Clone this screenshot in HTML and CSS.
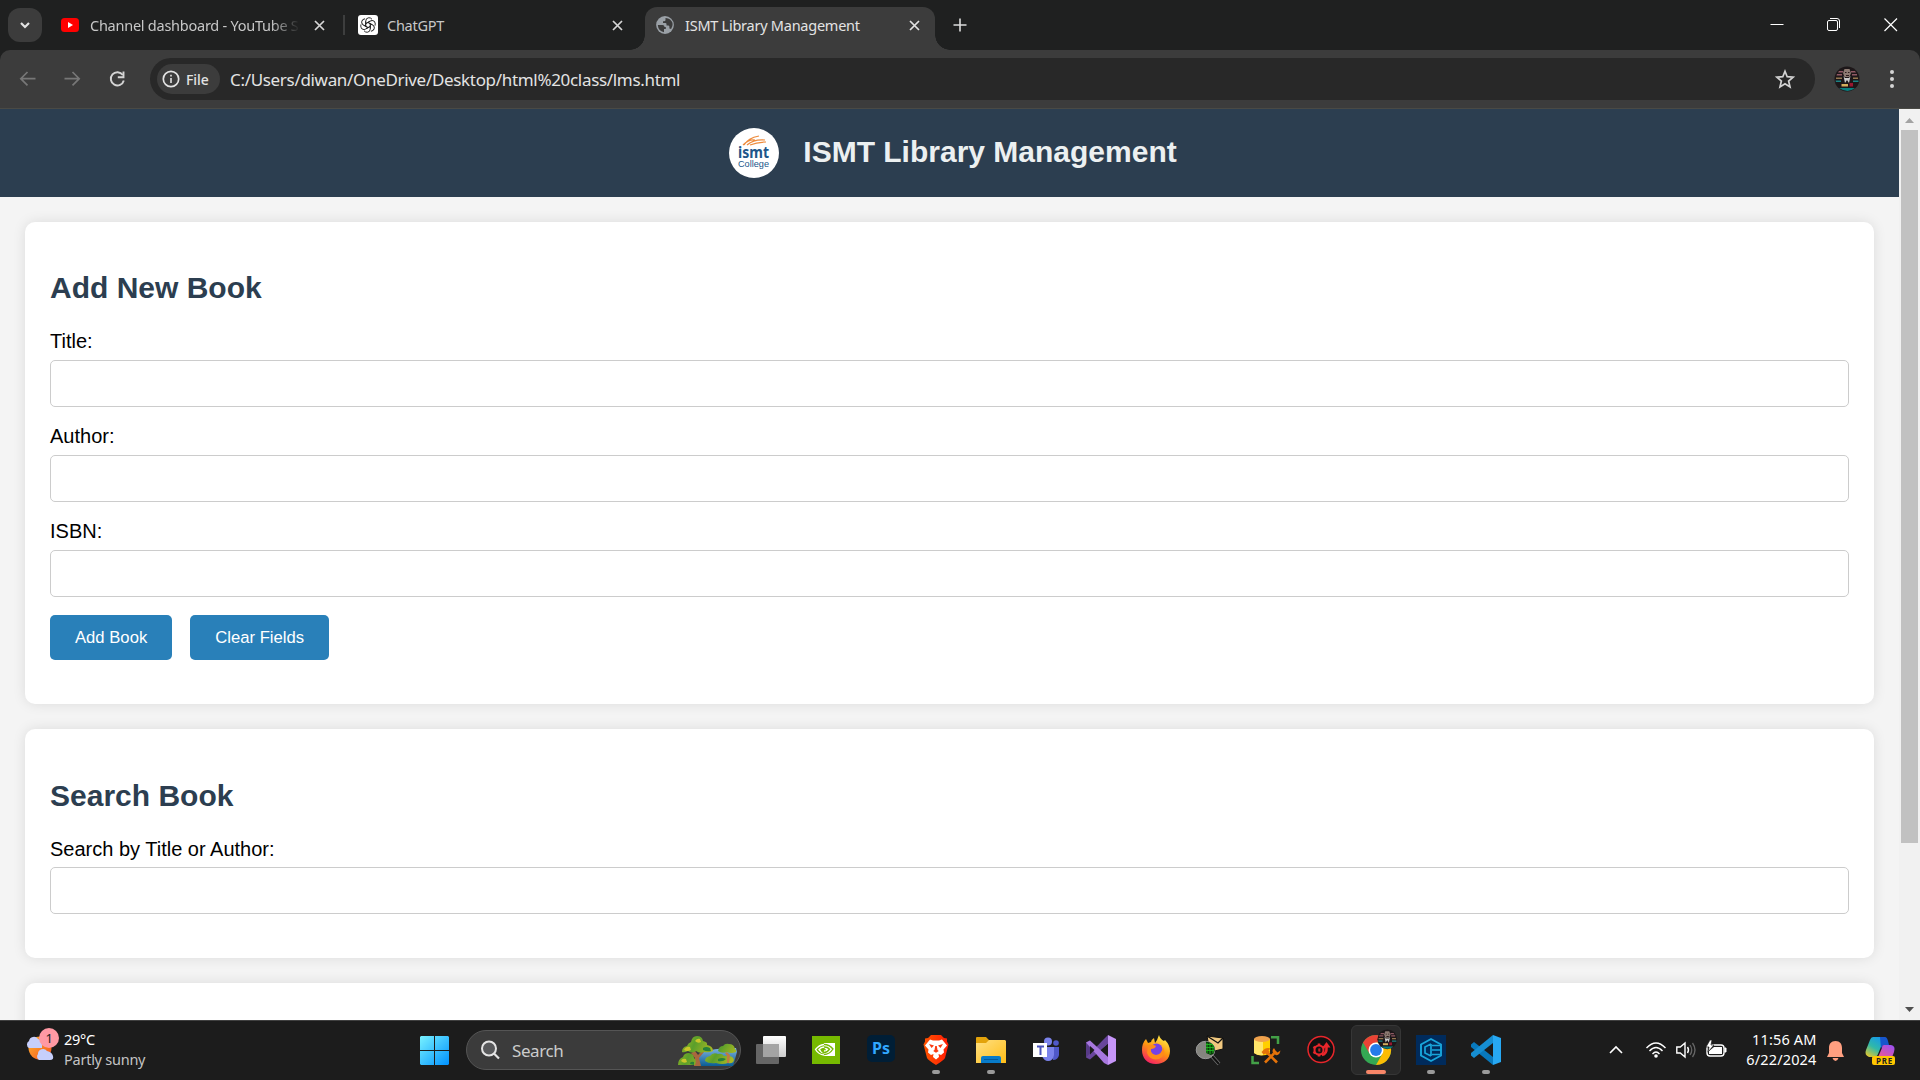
FILE: index.html
```html
<!DOCTYPE html>
<html lang="en">
<head>
<meta charset="utf-8">
<title>ISMT Library Management</title>
<link rel="stylesheet" href="styles.css">
</head>
<body>
<div class="tabstrip">
  <span class="tabsearch"><svg width="10" height="7" viewBox="0 0 10 7"><path d="M1 1l4 4 4-4" fill="none" stroke="#e3e3e3" stroke-width="2.200"/></svg></span>
  <div class="tab tab-youtube">
    <svg width="18" height="14" viewBox="0 0 18 14"><rect width="18" height="14" rx="3.500" fill="#f00"/><path d="M7 4v6l5-3z" fill="#fff"/></svg>
    <span class="tab-title faded">Channel dashboard - YouTube S</span>
    <svg class="close" width="11" height="11" viewBox="0 0 11 11"><path d="m1 1 9 9M10 1l-9 9"/></svg>
  </div>
  <span class="tab-sep"></span>
  <div class="tab tab-chatgpt">
    <svg width="20" height="20" viewBox="0 0 20 20"><rect width="20" height="20" rx="3" fill="#fff"/><g fill="none" stroke="#222" stroke-width=".95"><path id="petal" d="M7.700 11.300V6.200Q7.800 3 10.800 2.700q2 0 3.200 1.600M7.700 8.700 12 6.200"/><use href="#petal" transform="rotate(60 10 10)"/><use href="#petal" transform="rotate(120 10 10)"/><use href="#petal" transform="rotate(180 10 10)"/><use href="#petal" transform="rotate(240 10 10)"/><use href="#petal" transform="rotate(300 10 10)"/></g></svg>
    <span class="tab-title">ChatGPT</span>
    <svg class="close" width="11" height="11" viewBox="0 0 11 11"><path d="m1 1 9 9M10 1l-9 9"/></svg>
  </div>
  <div class="tab tab-active">
    <svg width="18" height="18" viewBox="0 0 18 18"><circle cx="9" cy="9" r="8.900" fill="#9aa0a6"/><path d="M1.800 9h4.700q2 .2 2 2h1.300v2H8v3.200Q2.200 15 1.800 9zM9.500 1.900V4q0 1.300-1.500 1.300H7v1.600h2.300q1.200 0 1.200 1.200v1.400h1.700q1 0 1.200 1v2q1 .2 1.700.6 3.500-5.600-1-9.600-2-1.700-4.600-1.600z" fill="#3c3c3c"/></svg>
    <span class="tab-title">ISMT Library Management</span>
    <svg class="close" width="11" height="11" viewBox="0 0 11 11"><path d="m1 1 9 9M10 1l-9 9"/></svg>
  </div>
  <svg class="newtab" width="14" height="14" viewBox="0 0 14 14"><path d="M7 .5v13M.5 7h13" stroke="#dcdcdc" stroke-width="1.600"/></svg>
  <div class="window-controls">
    <svg width="14" height="14" viewBox="0 0 14 14"><path d="M.5 6.500h13" stroke="#fff"/></svg>
    <svg width="14" height="14" viewBox="0 0 14 14"><g fill="none" stroke="#fff"><rect x=".5" y="2.500" width="10" height="10" rx="1.500"/><path d="M3 .5h7q2.500 0 2.500 2.500v7"/></g></svg>
    <svg width="14" height="14" viewBox="0 0 14 14"><path d="m.5.5 12.500 12.500M13 .5.500 13" stroke="#fff" stroke-width="1.200"/></svg>
  </div>
</div>

<div class="toolbar">
  <div class="nav">
    <svg width="18" height="18" viewBox="0 0 18 18"><path d="M16.500 8.700H2M8.500 2 1.800 8.700l6.700 6.700" fill="none" stroke="#777" stroke-width="1.700"/></svg>
    <svg width="18" height="18" viewBox="0 0 18 18"><path d="M.5 8.700H15M8.500 2l6.700 6.700-6.700 6.700" fill="none" stroke="#777" stroke-width="1.700"/></svg>
    <svg width="18" height="18" viewBox="0 0 18 18"><path d="M13.800 5A6.600 6.600 0 1 0 14.800 10.500" fill="none" stroke="#d4d4d4" stroke-width="1.900"/><path d="M14.500 1.500v5.700H8.800" fill="none" stroke="#d4d4d4" stroke-width="1.900"/></svg>
  </div>
  <div class="omnibox">
    <span class="chip"><svg width="18" height="18" viewBox="0 0 18 18"><circle cx="9" cy="9" r="7.700" fill="none" stroke="#e3e3e3" stroke-width="1.700"/><path d="M9 8v5M9 4.800v1.700" stroke="#e3e3e3" stroke-width="1.600"/></svg><span>File</span></span>
    <span class="url">C:/Users/diwan/OneDrive/Desktop/html%20class/lms.html</span>
    <svg class="star" width="20" height="20" viewBox="0 0 20 20"><path d="m10 2.200 2.200 5.500 5.900.5-4.500 3.800 1.400 5.900L10 14.700 5 17.900l1.400-5.900-4.500-3.800 5.900-.5z" fill="none" stroke="#d4d4d4" stroke-width="1.700"/></svg>
  </div>
  <svg class="avatar" width="26" height="26" viewBox="0 0 26 26">
    <defs><g id="portrait"><circle cx="13" cy="13" r="12.500" fill="#1d1719"/><path d="M5 5h4v1.500H4zM17 5h4l1 1.500h-5zM3 8h5v1.500H2.500zM18 8h5v1.500h-5z" fill="#8f5964"/><path d="M2 11.500h6V13H2zM19 11.500h5V13h-5z" fill="#94784f"/><path d="M1.500 14.500H7V16H2zM19 14.500h5.500V16H19z" fill="#1b8486"/><path d="M10.500 3h5l1.500 4-1.500 4h-5L9 7z" fill="#8d7a72"/><path d="M11 6h1.500v1H11zM14 6h1.500v1H14zM12 9h3v1h-3z" fill="#2a1d1c"/><path d="m9.500 10 1.500 7 2-3 2 3 1.500-7-1.500 2h-4z" fill="#c9c9c9"/><path d="M7.500 18H14v2.500H7.500z" fill="#d3ae5d"/><path d="M15.500 17H19v3.500h-3.500z" fill="#981730"/><path d="M5 22h16q-7 6-16 0z" fill="#087f80"/></g></defs><use href="#portrait"/>
  </svg>
  <svg class="dots" width="6" height="20" viewBox="0 0 6 20"><g fill="#d4d4d4"><circle cx="3" cy="3" r="2"/><circle cx="3" cy="10" r="2"/><circle cx="3" cy="17" r="2"/></g></svg>
</div>

<div class="viewport">
  <div class="page">
    <header class="site-header">
      <svg class="logo" width="50" height="50" viewBox="0 0 50 50"><circle cx="25" cy="25" r="25" fill="#fff"/><g fill="none" stroke="#ee8b3c" stroke-width="1.200"><path d="M14 17q6-6 12-5M15 17q4-7 15-9M18 17q7-6 18-5M21 17q7-3 16-3"/></g><text x="9" y="29.500" class="logo-name" textLength="31" lengthAdjust="spacingAndGlyphs">ismt</text><text x="9" y="38.500" class="logo-sub" textLength="31" lengthAdjust="spacingAndGlyphs">College</text></svg>
      <h1>ISMT Library Management</h1>
    </header>
    <main>
      <section class="card card-add">
        <h2>Add New Book</h2>
        <form class="fields">
          <label for="title">Title:</label><input id="title" type="text">
          <label for="author">Author:</label><input id="author" type="text">
          <label for="isbn">ISBN:</label><input id="isbn" type="text">
          <div class="buttons"><button type="button">Add Book</button><button type="button">Clear Fields</button></div>
        </form>
      </section>
      <section class="card">
        <h2>Search Book</h2>
        <form class="fields"><label for="query">Search by Title or Author:</label><input id="query" type="text"></form>
      </section>
      <section class="card card-next"></section>
    </main>
  </div>
  <div class="scrollbar">
    <svg width="21" height="21" viewBox="0 0 21 21"><path d="m6 14 4.500-5 4.500 5z" fill="#a3a3a3"/></svg>
    <span class="thumb"></span>
    <svg class="down" width="21" height="21" viewBox="0 0 21 21"><path d="m6 8 4.500 5L15 8z" fill="#505050"/></svg>
  </div>
</div>

<div class="taskbar">
  <div class="weather">
    <svg width="34" height="34" viewBox="0 0 34 34"><defs><linearGradient id="sun" x2="1" y2="1"><stop stop-color="#ffb52e"/><stop offset="1" stop-color="#f4511e"/></linearGradient></defs><circle cx="14" cy="20" r="11.500" fill="url(#sun)"/><path d="M3 20a4 4 0 0 1 0-7 5 5 0 0 1 9-2q5 1 4 9zM13 32a4 4 0 0 1-1-6 5 5 0 0 1 9-3q5 1 6 5t-3 4z" fill="#c6cffc"/><circle cx="23" cy="10" r="10" fill="#ff99a4"/><text x="23" y="15" class="badge-num">1</text></svg>
    <div class="weather-text"><span>29°C</span><span class="dim">Partly sunny</span></div>
  </div>
  <svg class="start" width="29" height="29" viewBox="0 0 29 29"><defs><linearGradient id="win" gradientUnits="userSpaceOnUse" x2="29" y2="29"><stop stop-color="#78f2ff"/><stop offset="1" stop-color="#0091ff"/></linearGradient></defs><path fill="url(#win)" d="M1 0h13v14H0V1zM15 0h13l1 1v13H15zM0 15h14v14H1l-1-1zM15 15h14v13l-1 1H15z"/></svg>
  <div class="search">
    <svg width="20" height="20" viewBox="0 0 20 20"><circle cx="8" cy="8.500" r="7" fill="#58595b" stroke="#e4e4e4" stroke-width="2"/><path d="m13 13.500 5 5" stroke="#e4e4e4" stroke-width="2.200"/></svg>
    <span class="search-label">Search</span>
    <svg class="trees" width="60" height="30" viewBox="0 0 60 30"><defs><linearGradient id="river" x2="0" y2="1"><stop stop-color="#7fb3e0"/><stop offset="1" stop-color="#0a5d94"/></linearGradient><linearGradient id="leaf" x2="1" y2=".4"><stop stop-color="#b5bf1f"/><stop offset=".5" stop-color="#5a9f2b"/><stop offset="1" stop-color="#a8b823"/></linearGradient></defs><path d="M22 17q12-5 36-5l1 4-4 14H22q-3-7 0-13z" fill="url(#river)"/><path d="m17 15 3 4 4-4 2 1-5 6 2 8h-7l1-8-4-5z" fill="#a9683d"/><path d="M0 29q0-6 5-8 1-4 6-4 5 1 5 5 3 2 1 7zM4 16q0-5 5-6 1-3 4-4 1-6 6-6 5 0 6 5 5 1 4 4 6 1 6 6-4 2-9 1-4 2-8-1-4 3-8 0-4 2-6 1z" fill="url(#leaf)"/><path d="M40 15q1-5 5-5 2-3 6-2 5 0 6 5 2 1 1 3-5 2-9 0-5 2-9-1zM27 25q0-4 5-5 3-4 8-2 4-1 6 2 9-1 10 4-1 4-6 3-6 2-12 0-7 1-11-2z" fill="url(#leaf)"/><path d="m49 16 3 3-1 8h-2v-7l-2-3z" fill="#c07a42"/><path d="M6 14q2-4 6-3l1 3q-4 2-7 0zM17 5q2-3 5-2l1 3q-3 2-6-1zM3 25q1-3 5-2l1 3q-3 2-6-1z" fill="#cbc52a"/><path d="M25 12q3-2 7 0l1 3q-4 1-8-1zM12 28q0-3 4-2v3zM40 23q4-2 8 0-3 3-8 2z" fill="#27813a"/></svg>
  </div>
  <div class="apps">
    <span class="app"><svg width="30" height="30" viewBox="0 0 30 30"><defs><linearGradient id="pane" x2="0" y2="1"><stop stop-color="#fff"/><stop offset="1" stop-color="#ccc"/></linearGradient></defs><rect y="9" width="23" height="20" rx="1" fill="#666"/><rect x="7" y="1" width="23" height="21" rx="1" fill="url(#pane)"/><path d="M7 9h16v13H7z" fill="#a4a4a4"/></svg></span>
    <span class="app"><svg width="30" height="30" viewBox="0 0 30 30"><path fill="#76b900" d="M1 1h28v28H1z"/><path fill="#fff" d="M13 8h11v13H13z"/><g fill="none"><path d="M13 9.500Q8 10 4.500 14.500q3 5 8.500 5.500" stroke="#fff" stroke-width="1.300"/><path d="M13 9.500q5.500 0 9 4.500-3.500 5.500-9 5.500" stroke="#76b900" stroke-width="1.300"/><path d="M13 12q-3 .3-5 2.500 2 3 5 3.200" stroke="#fff" stroke-width="1.400"/><path d="M13 12q3.500-.2 5.500 2.200-2 3.300-5.500 3.300-2-.5-2.500-2.500Q11 13.500 13 13.700l1.500 1.500" stroke="#76b900" stroke-width="1.400"/></g></svg></span>
    <span class="app"><svg width="30" height="30" viewBox="0 0 30 30"><rect x="1" y="0" width="28" height="27" rx="5" fill="#001e36"/><text x="6" y="18.500" class="ps" textLength="18" lengthAdjust="spacingAndGlyphs">Ps</text></svg></span>
    <span class="app running"><svg width="30" height="30" viewBox="0 0 30 30"><defs><linearGradient id="brave" x2="1"><stop stop-color="#ff5500"/><stop offset="1" stop-color="#ff1b05"/></linearGradient></defs><path d="m10 0-3 3-3 .5v3l-1.500 3L6 23q1 2 9 7 8-5 9-7l3.500-13.500-1.500-3v-3L23 3l-3-3z" fill="url(#brave)"/><path d="m9 4.500 3 1h6l3-1 5 6-3.500 4 .5 3-3 2.500-2.500-1 .5 3-3 2.500-3-2.500.5-3-2.500 1L7 17.500l.5-3L4 10.500z" fill="#fff"/><path d="m8 9 5 1.500L10.500 13zM22 9l-5 1.500 2.500 2.500zM14.200 11h1.600l.7 4 1.300 1-2.800 1.700-2.800-1.700 1.300-1z" fill="#fb3c12"/></svg></span>
    <span class="app running"><svg width="30" height="30" viewBox="0 0 30 30"><defs><linearGradient id="folder" x2="1" y2="1"><stop stop-color="#ffe083"/><stop offset="1" stop-color="#ffbd16"/></linearGradient></defs><path d="M0 3q0-1 1-1h9l3 3h15v7H0z" fill="#e3a30b"/><path d="M0 8h10l3-3h16l1 1v22H0z" fill="url(#folder)"/><path d="M5 28v-5q0-2 2-2h16q2 0 2 2v5z" fill="#087bc9"/><path d="M8 24.500h14" stroke="#035a9c"/></svg></span>
    <span class="app"><svg width="30" height="30" viewBox="0 0 30 30"><circle cx="17" cy="6.500" r="4" fill="#7b83eb"/><circle cx="25" cy="8" r="2.800" fill="#5059c9"/><path d="M20 12h8v8q-1 5-6 5z" fill="#5059c9"/><path d="M12 12h11v8q-1 6-6 6-4 0-6-5z" fill="#7b83eb"/><path d="M2 8h14v14H2z" fill="#fff"/><path d="M6 11.500h7M9.500 11.500V20" stroke="#4b53bc" stroke-width="2"/></svg></span>
    <span class="app"><svg width="30" height="30" viewBox="0 0 30 30"><path d="M0 7.500 4 5.500v18L0 22z" fill="#573a86"/><path d="M4 24.500 0 22.500 18 4l4-4v9z" fill="#68459b"/><path d="m0 7.500 4-2L22 22v8l-4-2z" fill="#a777de"/><path d="m22 0 8 4v22l-8 4z" fill="#c695f8"/><path d="m4 11 4.500 4L4 19.500zM22 9v12l-7-6z" fill="#1b1b1b"/></svg></span>
    <span class="app"><svg width="30" height="30" viewBox="0 0 30 30"><defs><linearGradient id="fox" x1=".8" x2=".3" y2="1"><stop stop-color="#fff44f"/><stop offset=".5" stop-color="#ff980e"/><stop offset="1" stop-color="#f51f65"/></linearGradient></defs><path d="M18 0q1 4 5 6l1-1q5 5 5 11c0 8-6 13-14 13C6 29 1 23 1 15Q1 8 5 4l2 4 3-1q0-2 3-4l1 5 2-3z" fill="url(#fox)"/><circle cx="15.500" cy="14.500" r="6" fill="#7542e5"/><path d="M7 10q5-1 8 1-1 3-5 3-1 5 5 6 6-1 7-8 4 8-4 12-9 2-12-6z" fill="#ff8c19"/></svg></span>
    <span class="app"><svg width="30" height="30" viewBox="0 0 30 30"><path d="m11 1 16 2v11l-13 3z" fill="#f0c87f" stroke="#111"/><path d="m11 1 11 7 5-5" fill="none" stroke="#111" stroke-width="1.300"/><path d="m15 20 8 9" stroke="#777" stroke-width="3.600"/><path d="m15 20 8 9" stroke="#111" stroke-width="2.200"/><ellipse cx="9.500" cy="15" rx="9.300" ry="8.700" fill="#85857f" stroke="#999"/><path d="M10 6.500q9 1 8.700 9-.5 4-4 4.500L10 18z" fill="#083c08"/><path d="M11 8v10M14 8v11M17 10v8M10 9.500h7M10 12.500h8M10 15.500h8" stroke="#21b921" stroke-width=".9"/></svg></span>
    <span class="app"><svg width="30" height="30" viewBox="0 0 30 30"><path d="M3 4v14q8 5 16 0V4z" fill="#ffcf00"/><path d="M3 4v14q4 3 9 2V5z" fill="#ffe56a"/><ellipse cx="11" cy="4" rx="8" ry="3" fill="#efa24d"/><path d="M20 2.200h7V9M1.500 21v7H8" fill="none" stroke="#43a047" stroke-width="2.500"/><path d="m14 27.500 9-9M16.500 18 26 27.500" stroke="#e57309" stroke-width="2.600"/><path d="m10.500 17 3-3q3-1.500 6-.5l-2 2 1.500 1.500-3 3-1.500-1.500-2 1zM23 13q-3 3 0 6 3 2.500 5.500-.5l1-3-3 2-2-2z" fill="#e57309"/></svg></span>
    <span class="app"><svg width="30" height="30" viewBox="0 0 30 30"><circle cx="15" cy="14.500" r="13" fill="#111" stroke="#e7262b" stroke-width="1.500"/><g fill="none" stroke="#e7262b"><circle cx="13" cy="15" r="4.500" stroke-width="2"/><path d="M13 8.500v2M13 19.500v2M7.400 11.800l1.700 1M7.400 18.200l1.700-1M18.600 11.800l-1.700 1" stroke-width="2.600"/><path d="M16 20q5-1 4.500-8" stroke-width="2.600"/><path d="M14.500 14H13v2h1.500" stroke-width="1.200"/></g><path d="m20.500 7 4 5.500h-8z" fill="#e7262b"/></svg></span>
    <span class="app current"><svg width="37" height="31" viewBox="0 0 37 31"><circle cx="15" cy="15" r="15" fill="#34a853"/><path d="M2 7.500a15 15 0 0 1 26 0H15l-6.500 11z" fill="#ea4335"/><path d="M28 7.500A15 15 0 0 1 15 30l6.500-11.500L15 7.500z" fill="#fbbc04"/><circle cx="15" cy="15" r="7.500" fill="#fff"/><circle cx="15" cy="15" r="5.900" fill="#267be9"/><use href="#portrait" transform="translate(16 -6) scale(.79)"/></svg></span>
    <span class="app running"><svg width="30" height="30" viewBox="0 0 30 30"><path fill="#002b5c" d="M0 0h30v30H0z"/><path d="m15 4 10 5.500v11L15 26 5 20.500v-11z" fill="none" stroke="#18a6db" stroke-width="1.900"/><path d="M15 9v12M15 9l-6 3v6l6 3M16 10.500h8M16 15h9M16 19.500h8" fill="none" stroke="#18a6db" stroke-width="1.700"/></svg></span>
    <span class="app running"><svg width="30" height="30" viewBox="0 0 30 30"><path d="m0 9.500 3-2.500 19 15v8L0 12z" fill="#0879bd"/><path d="m0 20.500 3 2.500L22 8V0L0 18z" fill="#168ed2"/><path d="m22 0 8 3v24l-8 3z" fill="#27a8f3"/></svg></span>
  </div>
  <div class="tray">
    <svg class="chev" width="14" height="8" viewBox="0 0 14 8"><path d="m1 7 6-6 6 6" fill="none" stroke="#fff" stroke-width="1.600"/></svg>
    <svg class="wifi" width="20" height="16" viewBox="0 0 20 16"><g fill="none" stroke="#fff" stroke-width="1.400"><path d="M.5 6Q10-4 19.500 6M3.500 9q6.500-7 13 0M6.500 12q3.500-4 7 0"/></g><circle cx="10" cy="14" r="1.800" fill="#fff"/></svg>
    <svg class="sound" width="20" height="18" viewBox="0 0 20 18"><path d="M.8 6h3.500L9 2v14l-4.700-4H.8zM11.500 6q2 3 0 6" fill="none" stroke="#fff" stroke-width="1.400"/><path d="M14 4q3.500 5 0 10M16.500 2q5 7 0 14" fill="none" stroke="#666" stroke-width="1.300"/></svg>
    <svg class="battery" width="21" height="18" viewBox="0 0 21 18"><rect x="1" y="5" width="17" height="11" rx="3" fill="none" stroke="#fff" stroke-width="1.400"/><path d="M8 7h8v7H3v-3z" fill="#fff"/><path d="M18.500 8h1.500v4h-1.500" stroke="#fff" fill="#fff"/><path d="M4 0 0 7h3l-1 5 6-7H5l1-5z" fill="#fff" stroke="#1c1c1c" stroke-width=".7"/></svg>
    <div class="clock"><span>11:56 AM</span><span>6/22/2024</span></div>
    <svg class="bell" width="17" height="20" viewBox="0 0 17 20"><path d="M8.500 0C4 0 2 3 2 7v5l-2 4h17l-2-4V7c0-4-2-7-6.500-7zM5.500 17h6q-1 3-3 3t-3-3z" fill="#ff9f80"/></svg>
    <svg class="copilot" width="30" height="29" viewBox="0 0 30 29"><defs><linearGradient id="cp1" x1=".7" x2=".1" y2="1"><stop stop-color="#169ae8"/><stop offset=".5" stop-color="#30b9a8"/><stop offset="1" stop-color="#eec927"/></linearGradient><linearGradient id="cp2" x1=".8" x2=".2" y2="1"><stop stop-color="#9e50ee"/><stop offset=".6" stop-color="#e3579e"/><stop offset="1" stop-color="#ff8557"/></linearGradient></defs><path d="M7 0h12l-7 17q-1 3-4 3H3q-5-2-3-7L4 3q1-3 3-3z" fill="url(#cp1)"/><path d="M14 0h5q2 0 3 4l1 4h-4q-3 0-4 4z" fill="#1756cc"/><path d="M18 8h7q5 1 3 7l-3 8q-1 4-5 4h-9q-3 0-4-5l3-1q2 0 3-3l3-7q0-3 2-3z" fill="url(#cp2)"/><rect x="6" y="19" width="23" height="9" rx="2" fill="#ffc700"/><text x="10" y="26.500" class="pre" textLength="16">PRE</text></svg>
  </div>
</div>
</body>
</html>
```
FILE: styles.css
```css
* { box-sizing: border-box; }
body { margin: 0; width: 1920px; height: 1080px; overflow: hidden; display: flex; flex-direction: column; background: #1f2020; font-family: "Liberation Sans", Arial, sans-serif; }
svg { display: block; flex: none; overflow: visible; }

/* browser tabs */
.tabstrip { height: 50px; flex: none; display: flex; background: #1f2020; font: 14.500px/20px "Noto Sans", sans-serif; letter-spacing: -.25px; color: #c7c7c7; }
.tabsearch { width: 34px; height: 34px; margin: 8px 0 0 8px; border-radius: 12px; background: #3c3c3c; display: flex; align-items: center; justify-content: center; }
.tab { display: flex; align-items: center; height: 50px; white-space: nowrap; }
.tab-title { flex: 1; margin-left: 9px; overflow: hidden; }
.close { fill: none; stroke: #d6d6d6; stroke-width: 1.700; }
.tab-youtube { width: 284px; margin-left: 19px; }
.tab-youtube .tab-title { flex: none; width: 210px; margin-left: 11px; }
.tab-youtube .close { margin-left: 14px; }
.faded { -webkit-mask-image: linear-gradient(90deg, #000 86%, transparent 100%); mask-image: linear-gradient(90deg, #000 86%, transparent 100%); }
.tab-sep { width: 2px; height: 20px; margin: 15px 13px 0 -2px; background: #3d3e3e; }
.tab-chatgpt { width: 265px; }
.tab-active { position: relative; height: 43px; width: 290px; margin: 7px 0 0 22px; padding: 0 15px 7px 11px; border-radius: 12px 12px 0 0; background: #3c3c3c; color: #e3e3e3; }
.tab-active .tab-title { margin-left: 11px; }
.tab-active .close { stroke: #e3e3e3; }
.tab-active::before, .tab-active::after { content: ""; position: absolute; bottom: 0; width: 15px; height: 15px; }
.tab-active::before { left: -15px; background: radial-gradient(circle at 0 0, transparent 14.500px, #3c3c3c 15px); }
.tab-active::after { right: -15px; background: radial-gradient(circle at 100% 0, transparent 14.500px, #3c3c3c 15px); }
.newtab { margin: 18px 0 0 18px; }
.window-controls { margin-left: auto; padding: 18px 22px 0 0; display: flex; gap: 43px; }

/* address bar */
.toolbar { height: 59px; flex: none; display: flex; align-items: center; background: #3c3c3c; border-bottom: 1px solid #4a4a45; border-radius: 10px 10px 0 0; font-family: "Noto Sans", sans-serif; }
.nav { width: 150px; padding-left: 19px; display: flex; gap: 27px; }
.omnibox { width: 1665px; height: 42px; display: flex; align-items: center; border-radius: 21px; background: #282828; padding: 0 20px 0 7px; }
.chip { width: 63px; height: 30px; border-radius: 15px; background: #3c3c3c; display: flex; align-items: center; gap: 6px; padding-left: 5px; color: #e3e3e3; font-size: 14px; font-weight: 500; letter-spacing: -.1px; }
.url { margin-left: 10px; font-size: 17px; letter-spacing: -.32px; color: #e3e3e3; white-space: nowrap; }
.star { margin-left: auto; }
.avatar { margin-left: 19px; }
.dots { margin-left: 29px; }

/* library page */
.viewport { height: 911px; flex: none; display: flex; overflow: hidden; }
.page { width: 1899px; background: #f4f4f4; }
.site-header { height: 88px; display: flex; align-items: center; justify-content: center; gap: 24.500px; padding-left: 6.500px; background: #2c3e50; color: #ecf0f1; }
h1 { margin: 0 0 2px; font-size: 30px; line-height: 34px; white-space: nowrap; }
.logo-name { font: bold 16px "Noto Sans", sans-serif; fill: #20568a; }
.logo-sub { font: 9px "Liberation Sans", sans-serif; fill: #20568a; }
main { padding: 25px; display: flex; flex-direction: column; gap: 25px; }
.card { border-radius: 10px; padding: 50px 25px 44px; background: #fff; box-shadow: 0 0 12.500px rgba(0,0,0,.1); }
.card-add { padding-top: 49px; }
.card-add label { margin-bottom: 7px; }
.card-add input + label { margin-top: 18px; }
.card-next { height: 180px; }
h2 { margin: 0 0 25px; font-size: 30px; line-height: 34px; color: #2c3e50; }
.fields { display: flex; flex-direction: column; font-size: 20px; color: #000; }
label { line-height: 23px; margin-bottom: 6px; }
input { width: 100%; height: 47px; border: 1px solid #ccc; border-radius: 5px; background: #fff; }
.buttons { display: flex; gap: 18px; margin-top: 18px; }
button { height: 45px; padding: 0 25px; border: 0; border-radius: 5px; background: #2980b9; color: #fff; font: 16.667px "Liberation Sans", Arial, sans-serif; }
.scrollbar { width: 21px; background: #f1f1f1; display: flex; flex-direction: column; align-items: center; }
.thumb { width: 17px; height: 713px; background: #c1c1c1; }
.down { margin-top: auto; }

/* taskbar */
.taskbar { height: 60px; flex: none; display: flex; align-items: flex-start; background: #1c1c1c; border-top: 1px solid #404040; color: #fff; font: 14.500px/20px "Noto Sans", sans-serif; letter-spacing: -.25px; white-space: nowrap; }
.weather { width: 420px; display: flex; padding: 7px 0 0 26px; }
.weather-text { display: flex; flex-direction: column; margin: 1px 0 0 4px; }
.dim { color: #c4c4c4; }
.badge-num { font-size: 13px; text-anchor: middle; fill: #222; }
.start { margin-top: 15px; }
.search { width: 275px; height: 40px; margin: 9px 0 0 17px; border: 1px solid #555; border-radius: 20px; background: #3b3b3b; display: flex; align-items: center; padding: 0 2px 0 14px; }
.search svg:first-child { margin-top: -1px; }
.search-label { margin: 2px 0 0 11px; font-size: 17px; letter-spacing: -.4px; color: #ccc; }
.search .trees { margin: 2px 0 0 auto; }
.apps { display: flex; margin-left: 2.500px; }
.app { position: relative; width: 55px; height: 59px; display: flex; justify-content: center; padding-top: 14px; }
.running::after, .current::after { content: ""; position: absolute; left: 23.500px; top: 49px; width: 8px; height: 4px; border-radius: 2px; background: #9a9a9a; }
.current { width: 50px; height: 50px; margin: 4px 2.500px 0; padding: 9px 0 0 9px; justify-content: flex-start; border: 1px solid #363636; border-radius: 6px; background: #292929; }
.current::after { left: 14px; top: 44px; width: 20px; background: #f78668; }
.ps { font: bold 16.500px "Noto Sans", sans-serif; letter-spacing: 0; fill: #31a8ff; }
.tray { flex: 1; display: flex; }
.chev { margin: 25px 0 0 95px; }
.wifi { margin: 21px 0 0 23px; }
.sound { margin: 20px 0 0 10px; }
.battery { margin: 19px 0 0 10px; }
.clock { width: 90px; display: flex; flex-direction: column; text-align: right; margin-top: 8px; letter-spacing: .15px; }
.bell { margin: 20px 0 0 10px; }
.copilot { margin: 16px 0 0 22px; }
.pre { font: bold 8px "Noto Sans", sans-serif; fill: #202020; }
```
